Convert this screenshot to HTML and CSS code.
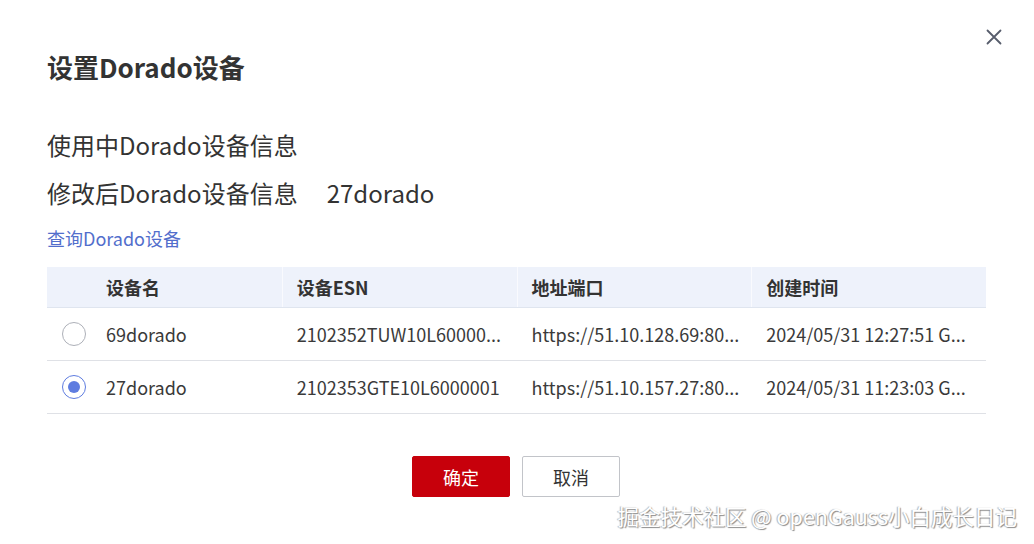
FILE: index.html
```html
<!DOCTYPE html>
<html lang="zh-CN">
<head>
<meta charset="utf-8">
<title>设置Dorado设备</title>
<link rel="stylesheet" href="styles.css">
</head>
<body>
<div class="dialog">
  <div class="head">
    <h1 class="title">设置Dorado设备</h1>
    <button class="close" aria-label="关闭">
      <svg width="16" height="16" viewBox="0 0 16 16"><path d="M1.5 1.5 L14.5 14.5 M14.5 1.5 L1.5 14.5" stroke="#575d6c" stroke-width="1.8" fill="none" stroke-linecap="round"/></svg>
    </button>
  </div>
  <div class="info">
    <div class="line">使用中Dorado设备信息</div>
    <div class="line"><span class="label">修改后Dorado设备信息</span><span class="value">27dorado</span></div>
  </div>
  <a class="link" href="#">查询Dorado设备</a>
  <div class="table">
    <div class="row thead">
      <div class="cell first"><span class="radio-space"></span>设备名</div>
      <div class="cell">设备ESN</div>
      <div class="cell">地址端口</div>
      <div class="cell">创建时间</div>
    </div>
    <div class="row">
      <div class="cell first"><span class="radio"></span>69dorado</div>
      <div class="cell">2102352TUW10L60000...</div>
      <div class="cell">https://51.10.128.69:80...</div>
      <div class="cell">2024/05/31 12:27:51 G...</div>
    </div>
    <div class="row">
      <div class="cell first"><span class="radio checked"></span>27dorado</div>
      <div class="cell">2102353GTE10L6000001</div>
      <div class="cell">https://51.10.157.27:80...</div>
      <div class="cell">2024/05/31 11:23:03 G...</div>
    </div>
  </div>
  <div class="actions">
    <button class="btn primary">确定</button>
    <button class="btn">取消</button>
  </div>
</div>
<div class="watermark">掘金技术社区 @ openGauss小白成长日记</div>
</body>
</html>
```

FILE: styles.css
```css
html, body {
  margin: 0;
  padding: 0;
  background: #ffffff;
}
body {
  font-family: "Noto Sans CJK SC", "Noto Sans", sans-serif;
  color: #333333;
  width: 1034px;
  height: 544px;
  position: relative;
  overflow: hidden;
}
.dialog {
  padding: 0 48px 0 47px;
}
.head {
  display: flex;
  justify-content: space-between;
  align-items: flex-start;
  padding-top: 29px;
  margin-right: -16px;
}
.title {
  margin: 20px 0 0 0;
  font-size: 26px;
  line-height: 36px;
  font-weight: 700;
  color: #333333;
}
.close {
  border: 0;
  background: none;
  padding: 0;
  width: 16px;
  height: 16px;
  display: flex;
  cursor: pointer;
}
.info {
  margin-top: 36px;
}
.line {
  font-size: 24px;
  line-height: 48px;
  color: #333333;
}
.value {
  margin-left: 29px;
}
.link {
  display: block;
  margin-top: 8px;
  font-size: 18px;
  line-height: 26px;
  color: #526ecc;
  text-decoration: none;
}
.table {
  margin-top: 16px;
}
.row {
  display: grid;
  grid-template-columns: repeat(4, 1fr);
  height: 52px;
  border-bottom: 1px solid #dfe1e6;
  font-size: 18px;
  color: #3a3a3a;
}
.row.thead {
  height: 40px;
  background: #eef2fb;
  border-bottom: 1px solid #dfe5ef;
  font-weight: 700;
  color: #333333;
}
.cell {
  display: flex;
  align-items: center;
  padding-left: 15px;
  white-space: nowrap;
  overflow: hidden;
}
.thead .cell + .cell {
  border-left: 1px solid #f9fafe;
  padding-left: 14px;
}
.radio, .radio-space {
  width: 24px;
  height: 24px;
  margin-right: 20px;
  flex: none;
  box-sizing: border-box;
}
.radio {
  border: 1px solid #adb0b8;
  border-radius: 50%;
  display: flex;
  align-items: center;
  justify-content: center;
}
.radio.checked {
  border-color: #5e7ce0;
}
.radio.checked::after {
  content: "";
  width: 12px;
  height: 12px;
  border-radius: 50%;
  background: #5e7ce0;
}
.actions {
  display: flex;
  justify-content: center;
  gap: 12px;
  margin-top: 42px;
  padding-right: 1px;
}
.btn {
  width: 98px;
  height: 41px;
  border: 1px solid #c2c4c9;
  border-radius: 2px;
  background: #ffffff;
  font-family: inherit;
  font-size: 18px;
  color: #333333;
  padding: 0;
}
.btn.primary {
  background: #c7000b;
  border-color: #c7000b;
  color: #ffffff;
}
.watermark {
  position: absolute;
  right: 17px;
  bottom: 13px;
  font-size: 21.5px;
  line-height: 30px;
  color: #ffffff;
  text-shadow: 1px 1px 1px #8a8a8a, -1px 0 1px #b0b0b0;
  white-space: nowrap;
}
```
